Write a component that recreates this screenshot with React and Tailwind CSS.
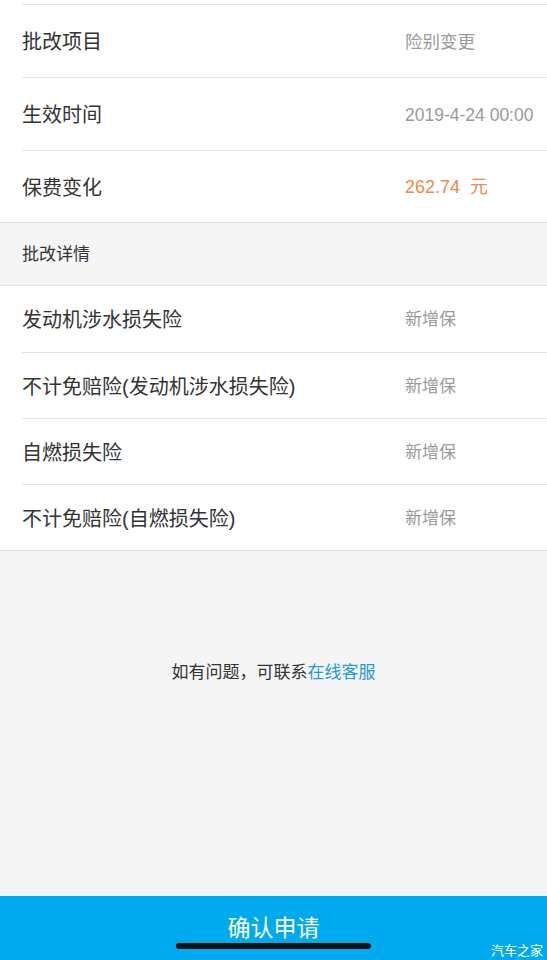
export default function App() {
  const font = { fontFamily: '"Liberation Sans", "Noto Sans CJK SC", sans-serif' };
  const top = [
    ["批改项目", "险别变更", "text-[#9a9a9a]"],
    ["生效时间", "2019-4-24 00:00", "text-[#9a9a9a]"],
    ["保费变化", "262.74\u00a0\u00a0元", "text-[#ee8a4a]"],
  ];
  const details = [
    "发动机涉水损失险",
    "不计免赔险(发动机涉水损失险)",
    "自燃损失险",
    "不计免赔险(自燃损失险)",
  ];
  return (
    <div className="w-[547px] h-[960px] bg-[#f5f5f5] flex flex-col overflow-hidden relative" style={font}>
      <div className="bg-white">
        <div className="h-[4px]" />
        {top.map(([l, v, c], i) => (
          <div key={l}>
            <div className="ml-[22px] h-px bg-[#e3e3e3]" />
            <div className={`flex items-center pt-[2px] ${i === 2 ? "h-[71px]" : "h-[72px]"}`}>
              <div className="w-[405px] pl-[22px] text-[20px] text-[#333]">{l}</div>
              <div className={`${i === 2 ? "text-[18px]" : "text-[17.5px]"} ${c}`}>{v}</div>
            </div>
          </div>
        ))}
      </div>
      <div className="h-px bg-[#e0e0e0]" />
      <div className="h-[62px] flex items-center pt-[2px] pl-[22px] text-[17px] text-[#333] bg-[#f5f5f5]">批改详情</div>
      <div className="h-px bg-[#e0e0e0]" />
      <div className="bg-white">
        {details.map((l, i) => (
          <div key={l}>
            {i > 0 && <div className="ml-[22px] h-px bg-[#e3e3e3]" />}
            <div className={`flex items-center pt-[2px] ${i === 0 ? "h-[66px]" : "h-[65px]"}`}>
              <div className="w-[405px] pl-[22px] text-[20px] text-[#333]">{l}</div>
              <div className="text-[17px] text-[#9a9a9a]">新增保</div>
            </div>
          </div>
        ))}
      </div>
      <div className="h-px bg-[#dedede]" />
      <div className="flex-1 flex flex-col items-center pt-[109px]">
        <div className="text-[17px] text-[#333]">
          如有问题，可联系<span className="text-[#1e9bd7]">在线客服</span>
        </div>
      </div>
      <div className="h-[64px] bg-[#00aaee] flex items-center justify-center text-[23px] text-white">
        确认申请
      </div>
      <div className="absolute left-[176px] top-[943px] w-[195px] h-[6px] rounded-full bg-[#111]" />
      <div className="absolute right-[4px] top-[941px] text-[13px] text-white">汽车之家</div>
    </div>
  );
}
